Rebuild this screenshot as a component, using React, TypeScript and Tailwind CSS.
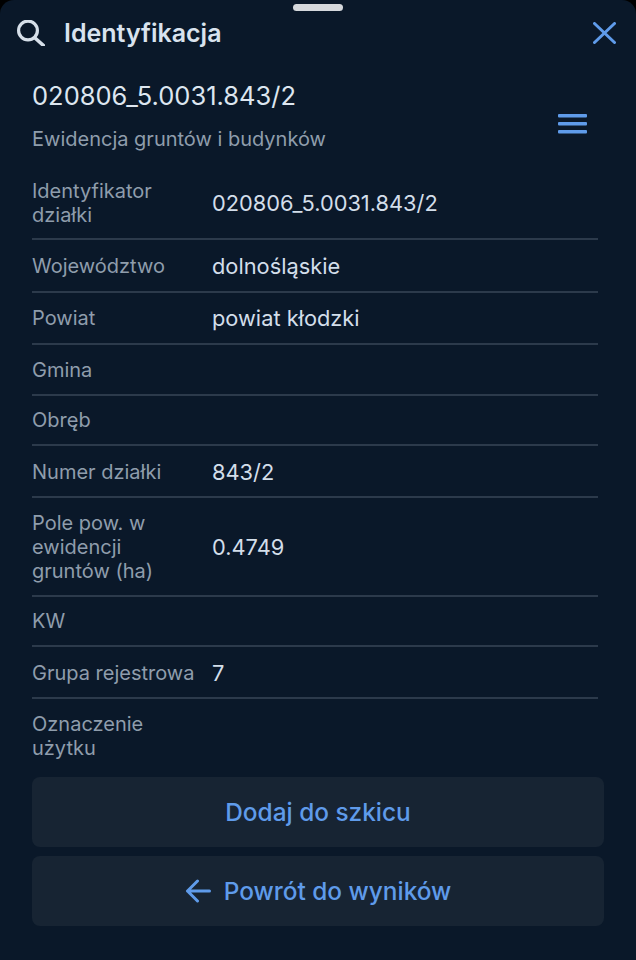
interface Row {
  label: string;
  value?: string;
}

const rows: Row[] = [
  { label: 'Identyfikator działki', value: '020806_5.0031.843/2' },
  { label: 'Województwo', value: 'dolnośląskie' },
  { label: 'Powiat', value: 'powiat kłodzki' },
  { label: 'Gmina' },
  { label: 'Obręb' },
  { label: 'Numer działki', value: '843/2' },
  { label: 'Pole pow. w ewidencji gruntów (ha)', value: '0.4749' },
  { label: 'KW' },
  { label: 'Grupa rejestrowa', value: '7' },
  { label: 'Oznaczenie użytku' },
];

export default function App() {
  return (
    <div className="h-[960px] w-[636px] overflow-hidden bg-black font-['Inter',sans-serif]">
      <div className="relative flex h-full flex-col rounded-t-[14px] bg-[#0a1829]">
        {/* drag handle */}
        <div className="absolute left-[293px] top-[4px] h-[7px] w-[50px] rounded-full bg-[#d5d8dc]" />

        <div className="flex h-[66px] items-center justify-between pl-[17px] pr-[20px]">
          <div className="flex items-center gap-[19px]">
            <svg width="28" height="26" viewBox="0 0 28 26" fill="none" stroke="#d6dfe9" strokeWidth="3.2" className="mt-[-1px]">
              <circle cx="11" cy="10.5" r="9.4" />
              <path d="M18 18L26.5 25.5" strokeLinecap="round" strokeWidth="3.6" />
            </svg>
            <span className="pt-[2px] text-[25px] font-semibold text-[#d9e3ee]">Identyfikacja</span>
          </div>
          <svg width="23" height="22" viewBox="0 0 23 22" fill="none" stroke="#5f9bea" strokeWidth="3" strokeLinecap="round">
            <path d="M1.5 1.5L21.5 20.5M21.5 1.5L1.5 20.5" />
          </svg>
        </div>

        <div className="mt-[14px] flex items-center justify-between pl-[32px] pr-[49px]">
          <div>
            <div className="text-[25.5px] leading-[32px] text-[#dde6f0]">020806_5.0031.843/2</div>
            <div className="mt-[13px] text-[20px] leading-[28px] text-[#8f9dac]">Ewidencja gruntów i budynków</div>
          </div>
          <svg width="29" height="20" viewBox="0 0 29 20" fill="#5f9bea" className="mt-[15px]">
            <rect x="0" y="0" width="29" height="3.6" rx="1" />
            <rect x="0" y="8" width="29" height="3.6" rx="1" />
            <rect x="0" y="16" width="29" height="3.6" rx="1" />
          </svg>
        </div>

        <div className="ml-[32px] mr-[38px] mt-[13px]">
          {rows.map((row, i) => (
            <div
              key={row.label}
              className={`flex items-center pb-[11.7px] pt-[12.7px] ${i < rows.length - 1 ? 'border-b-2 border-[#2c3a4b]' : ''}`}
            >
              <div className="w-[180px] shrink-0 pr-[12px] text-[20px] leading-[24px] text-[#8f9dac]">{row.label}</div>
              {row.value && <div className="text-[21.8px] leading-[26px] text-[#d3deea]">{row.value}</div>}
            </div>
          ))}
        </div>

        <div className="mx-[32px] mt-[5px] flex flex-col gap-[9px]">
          <button className="flex h-[70px] items-center justify-center rounded-[8px] bg-[#172433] pt-[2px] text-[24.4px] font-medium text-[#5f9bea]">
            Dodaj do szkicu
          </button>
          <button className="flex h-[70px] items-center justify-center gap-[13px] rounded-[8px] bg-[#172433] text-[24.4px] font-medium text-[#5f9bea]">
            <svg width="26" height="24" viewBox="0 0 26 24" fill="none" stroke="#5f9bea" strokeWidth="3" strokeLinecap="round" strokeLinejoin="round">
              <path d="M24.5 12H2.5M12.5 2L2.5 12L12.5 22" />
            </svg>
            <span className="pt-[2px]">Powrót do wyników</span>
          </button>
        </div>
      </div>
    </div>
  );
}
